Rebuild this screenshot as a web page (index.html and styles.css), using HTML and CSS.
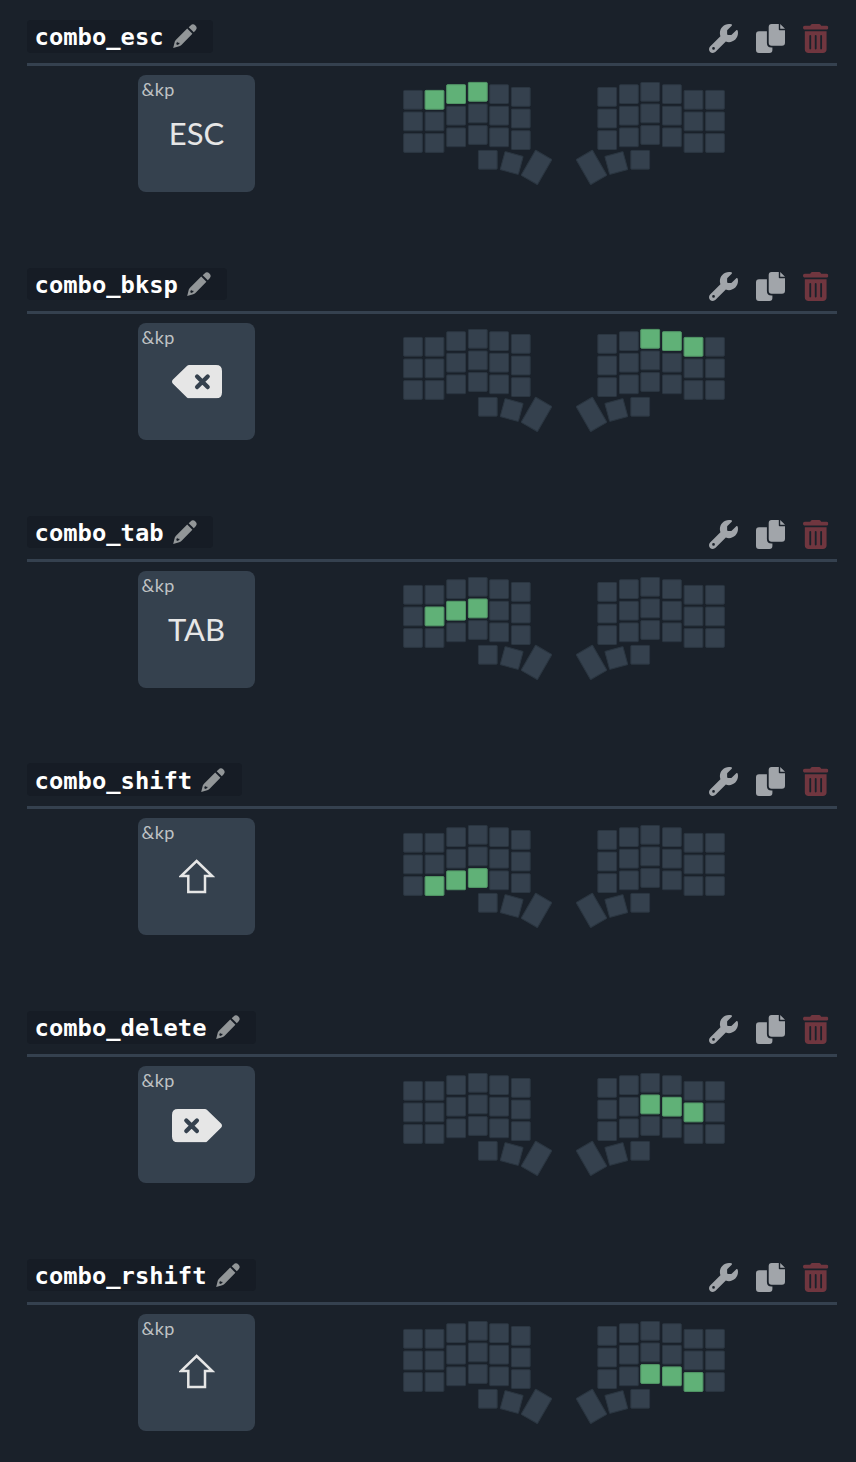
FILE: index.html
```
<!DOCTYPE html>
<html lang="en">
<head>
<meta charset="utf-8">
<title>Combos</title>
<link rel="stylesheet" href="styles.css">
</head>
<body>
<svg class="sprite" aria-hidden="true">
  <defs>
    <symbol id="pencil" viewBox="0 0 24 24"><path d="M15.7 3.3 17.6 1.4Q20 -.9 22.4 1.5 24.8 3.9 22.7 6.3L20.8 8.3ZM14.2 4.6 19.4 9.8 8.4 20.9Q7.4 21.9 6.2 22.3L.2 23.9 1.8 17.6Q2.1 16.6 3 15.7ZM4.1 17.8 3.2 20.1 4.2 21 6.4 20.1V18.8H4.9Z" fill-rule="evenodd"/></symbol>
    <symbol id="wrench" viewBox="0 0 512 512"><path d="M352 320c88.4 0 160-71.6 160-160c0-15.3-2.2-30.1-6.2-44.2c-3.1-10.8-16.4-13.2-24.3-5.3l-76.8 76.8c-3 3-7.1 4.7-11.3 4.7H336c-8.8 0-16-7.2-16-16V118.6c0-4.2 1.7-8.3 4.7-11.3l76.8-76.8c7.9-7.9 5.4-21.2-5.3-24.3C382.1 2.2 367.3 0 352 0C263.6 0 192 71.6 192 160c0 19.1 3.4 37.5 9.5 54.5L19.9 396.1C7.2 408.8 0 426.1 0 444.1C0 481.6 30.4 512 67.9 512c18 0 35.3-7.2 48-19.9L297.5 310.5c17 6.2 35.4 9.5 54.5 9.5zM80 408a24 24 0 1 1 0 48 24 24 0 1 1 0-48z"/></symbol>
    <symbol id="copy" viewBox="0 0 29 29"><path d="M15.6 0H22.8V5.4Q22.8 6.2 23.6 6.2H29V18.8Q29 21.8 26 21.8H15.6Q12.7 21.8 12.7 18.8V3Q12.7 0 15.6 0ZM24.2 0 29 4.8H24.2ZM3 7.3H10.9V19Q10.9 23.6 15.5 23.6H16.4V26Q16.4 29 13.4 29H3Q0 29 0 26V10.3Q0 7.3 3 7.3Z"/></symbol>
    <symbol id="trash" viewBox="0 0 448 512"><path d="M135.2 17.7C140.6 6.8 151.7 0 163.8 0H284.2c12.1 0 23.2 6.8 28.6 17.7L320 32h96c17.7 0 32 14.3 32 32s-14.3 32-32 32H32C14.3 96 0 81.7 0 64S14.3 32 32 32h96zM32 128H416V448c0 35.3-28.7 64-64 64H96c-35.3 0-64-28.7-64-64zm96 64c-8.8 0-16 7.2-16 16V432c0 8.8 7.2 16 16 16s16-7.2 16-16V208c0-8.8-7.2-16-16-16zm96 0c-8.8 0-16 7.2-16 16V432c0 8.8 7.2 16 16 16s16-7.2 16-16V208c0-8.8-7.2-16-16-16zm96 0c-8.8 0-16 7.2-16 16V432c0 8.8 7.2 16 16 16s16-7.2 16-16V208c0-8.8-7.2-16-16-16z"/></symbol>
    <symbol id="backspace" viewBox="0 0 51 34"><path d="M17.5 0H45Q51 0 51 6V28Q51 34 45 34H17.5Q16.2 34 15.2 33L1 19.2Q-1 17 1 14.8L15.2 1Q16.2 0 17.5 0Z"/><path class="cross" d="M25.6 11.7 36.4 22.5M36.4 11.7 25.6 22.5"/></symbol>
    <symbol id="delete" viewBox="0 0 51 34"><path d="M33.5 0H6Q0 0 0 6V28Q0 34 6 34H33.5Q34.8 34 35.8 33L50 19.2Q52 17 50 14.8L35.8 1Q34.8 0 33.5 0Z"/><path class="cross" d="M14.6 11.7 25.4 22.5M25.4 11.7 14.6 22.5"/></symbol>
    <symbol id="shift" viewBox="0 0 36 35"><path class="arrow" d="M17.6 2 33.2 17.1H26V33H9.3V17.1H2Z"/></symbol>

    <rect id="k" width="18.8" height="18.8" rx=".8"/>
    <g id="col"><use href="#k"/><use href="#k" y="21.6"/><use href="#k" y="43.2"/></g>
    <g id="half">
      <use href="#col" x=".6" y="8.4"/><use href="#col" x="22.1" y="8.4"/>
      <use href="#col" x="43.7" y="2.7"/><use href="#col" x="65.4" y=".4"/>
      <use href="#col" x="86.7" y="2.7"/><use href="#col" x="108.4" y="5.5"/>
      <use href="#k" x="75.4" y="68.4"/>
      <rect x="99.3" y="71.6" width="18.8" height="18.8" rx=".8" transform="rotate(15 108.7 81)"/>
      <rect x="124.1" y="70.9" width="18.8" height="29" rx=".8" transform="rotate(30 133.5 85.4)"/>
    </g>
    <symbol id="board" viewBox="0 0 322 104"><use href="#half"/><use href="#half" transform="matrix(-1 0 0 1 322 0)"/></symbol>
  </defs>
</svg>

<main class="combos">
  <section class="combo">
    <header class="head"><div class="name"><span>combo_esc</span><svg class="edit"><use href="#pencil"/></svg></div>
      <div class="actions"><svg class="icon"><use href="#wrench"/></svg><svg class="icon"><use href="#copy"/></svg><svg class="icon trash"><use href="#trash"/></svg></div></header>
    <div class="body"><div class="key"><span class="bind">&amp;kp</span><span class="label">ESC</span></div>
      <svg class="board" viewBox="0 0 322 104"><use href="#board"/><g class="on"><use href="#k" x="22.1" y="8.4"/><use href="#k" x="43.7" y="2.7"/><use href="#k" x="65.4" y=".4"/></g></svg></div>
  </section>
  <section class="combo">
    <header class="head"><div class="name"><span>combo_bksp</span><svg class="edit"><use href="#pencil"/></svg></div>
      <div class="actions"><svg class="icon"><use href="#wrench"/></svg><svg class="icon"><use href="#copy"/></svg><svg class="icon trash"><use href="#trash"/></svg></div></header>
    <div class="body"><div class="key"><span class="bind">&amp;kp</span><svg class="glyph"><use href="#backspace"/></svg></div>
      <svg class="board" viewBox="0 0 322 104"><use href="#board"/><g class="on"><use href="#k" x="237.8" y=".4"/><use href="#k" x="259.5" y="2.7"/><use href="#k" x="281.1" y="8.4"/></g></svg></div>
  </section>
  <section class="combo">
    <header class="head"><div class="name"><span>combo_tab</span><svg class="edit"><use href="#pencil"/></svg></div>
      <div class="actions"><svg class="icon"><use href="#wrench"/></svg><svg class="icon"><use href="#copy"/></svg><svg class="icon trash"><use href="#trash"/></svg></div></header>
    <div class="body"><div class="key"><span class="bind">&amp;kp</span><span class="label">TAB</span></div>
      <svg class="board" viewBox="0 0 322 104"><use href="#board"/><g class="on"><use href="#k" x="22.1" y="30"/><use href="#k" x="43.7" y="24.3"/><use href="#k" x="65.4" y="22"/></g></svg></div>
  </section>
  <section class="combo">
    <header class="head"><div class="name"><span>combo_shift</span><svg class="edit"><use href="#pencil"/></svg></div>
      <div class="actions"><svg class="icon"><use href="#wrench"/></svg><svg class="icon"><use href="#copy"/></svg><svg class="icon trash"><use href="#trash"/></svg></div></header>
    <div class="body"><div class="key"><span class="bind">&amp;kp</span><svg class="glyph up"><use href="#shift"/></svg></div>
      <svg class="board" viewBox="0 0 322 104"><use href="#board"/><g class="on"><use href="#k" x="22.1" y="51.6"/><use href="#k" x="43.7" y="45.9"/><use href="#k" x="65.4" y="43.6"/></g></svg></div>
  </section>
  <section class="combo">
    <header class="head"><div class="name"><span>combo_delete</span><svg class="edit"><use href="#pencil"/></svg></div>
      <div class="actions"><svg class="icon"><use href="#wrench"/></svg><svg class="icon"><use href="#copy"/></svg><svg class="icon trash"><use href="#trash"/></svg></div></header>
    <div class="body"><div class="key"><span class="bind">&amp;kp</span><svg class="glyph"><use href="#delete"/></svg></div>
      <svg class="board" viewBox="0 0 322 104"><use href="#board"/><g class="on"><use href="#k" x="237.8" y="22"/><use href="#k" x="259.5" y="24.3"/><use href="#k" x="281.1" y="30"/></g></svg></div>
  </section>
  <section class="combo">
    <header class="head"><div class="name"><span>combo_rshift</span><svg class="edit"><use href="#pencil"/></svg></div>
      <div class="actions"><svg class="icon"><use href="#wrench"/></svg><svg class="icon"><use href="#copy"/></svg><svg class="icon trash"><use href="#trash"/></svg></div></header>
    <div class="body"><div class="key"><span class="bind">&amp;kp</span><svg class="glyph up"><use href="#shift"/></svg></div>
      <svg class="board" viewBox="0 0 322 104"><use href="#board"/><g class="on"><use href="#k" x="237.8" y="43.6"/><use href="#k" x="259.5" y="45.9"/><use href="#k" x="281.1" y="51.6"/></g></svg></div>
  </section>
</main>
</body>
</html>
```
FILE: styles.css
```
* { box-sizing: border-box; }
body { margin: 0; background: #1a212a; color: #fff; overflow: hidden; }
svg { display: block; overflow: visible; flex: none; }
.sprite { position: absolute; width: 0; height: 0; }

.combos { height: 1462px; padding: 20px 19px 0 27px; overflow: hidden; }
.combo { height: 247.8px; }

.head {
  display: flex;
  align-items: flex-start;
  justify-content: space-between;
  height: 46px;
  border-bottom: 3px solid #35414f;
}
.name {
  display: flex;
  gap: 9.2px;
  height: 32.5px;
  padding: 1.2px 16.2px 0 7.6px;
  border-radius: 4px;
  background: #161c25;
  font: bold 23.8px/33px "DejaVu Sans Mono", monospace;
}
.edit { width: 24px; height: 24px; margin-top: 3px; fill: #929698; }
.actions { display: flex; gap: 18px; padding: 4px 9px 0 0; }
.icon { width: 29px; height: 29px; fill: #a1a5aa; }
.trash { width: 25.4px; fill: #70363f; }

.body { display: flex; gap: 148px; padding: 9px 0 0 111px; }
.key {
  display: grid;
  grid-template-rows: 31px 54px;
  width: 117px;
  height: 117px;
  border-radius: 8px;
  background: #35414e;
  font-family: Lato, sans-serif;
}
.bind { padding-left: 3.4px; font-size: 18px; line-height: 29.6px; letter-spacing: .5px; color: #bfc2c4; }
.label { font-size: 31px; line-height: 54px; text-align: center; color: #e6e6e6; }
.glyph { width: 50px; height: 33.4px; margin: 2.4px 0 0 1px; place-self: center; fill: #e6e6e6; }
.glyph.up { width: 36px; height: 35px; margin: 0; }
.cross { fill: none; stroke: #35414e; stroke-width: 4.4; stroke-linecap: round; }
.arrow { fill: none; stroke: #e6e6e6; stroke-width: 2.5; }

.board {
  width: 322px;
  height: 104px;
  margin: 6.6px 0 0 -.3px;
  fill: #35414e;
  stroke: #2b3641;
  stroke-width: 1;
}
.on { fill: #60b177; stroke: #519665; }
```
